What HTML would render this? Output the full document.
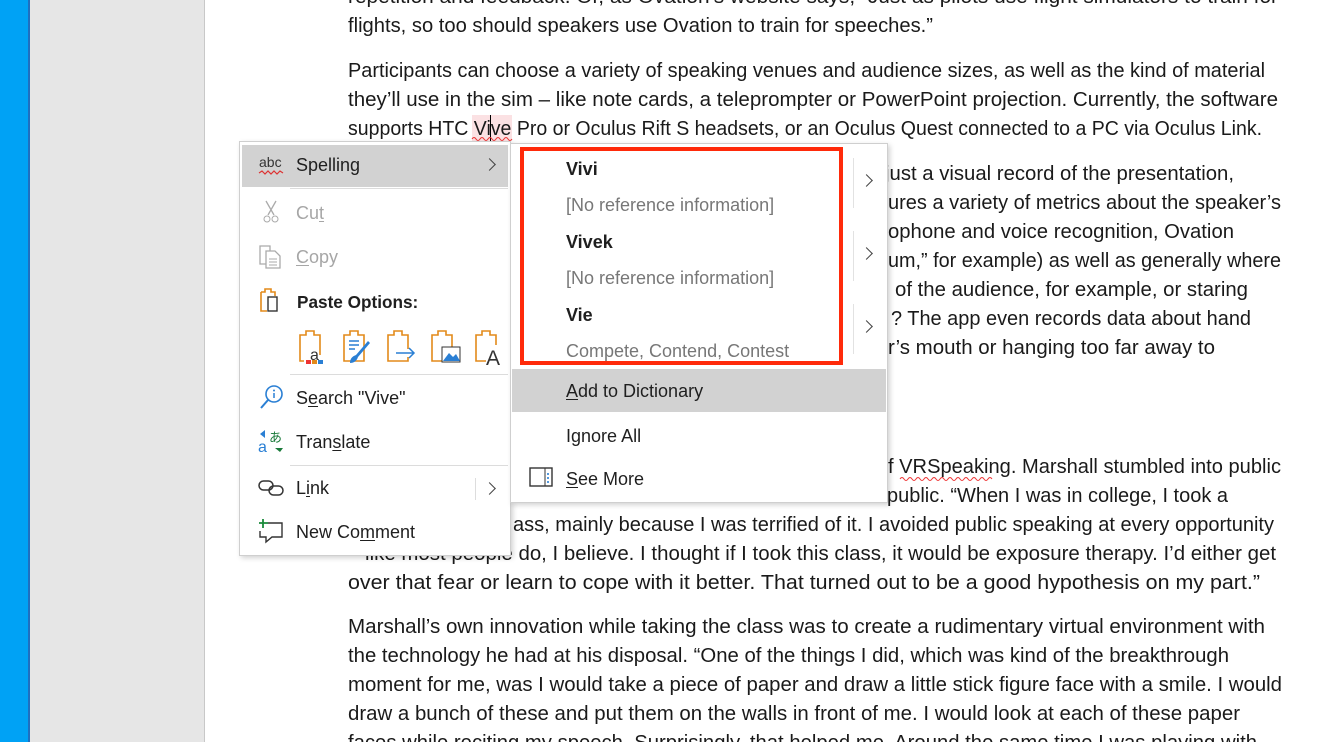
<!DOCTYPE html>
<html><head><meta charset="utf-8"><style>
*{margin:0;padding:0;box-sizing:border-box}
body{width:1319px;height:742px;overflow:hidden;background:#fff;position:relative;font-family:"Liberation Sans",sans-serif}
.abs{position:absolute}
.mi{position:absolute;font-size:18px;color:#1f1f1f;white-space:nowrap}
.dis{color:#a6a6a6}
.sep{position:absolute;height:1px;background:#dcdcdc}
.chev{position:absolute;width:9px;height:9px;border-right:1.6px solid #444;border-top:1.6px solid #444;transform:rotate(45deg)}
u{text-decoration:underline;text-underline-offset:2px}
</style></head><body>
<div class="abs" style="left:0;top:0;width:28px;height:742px;background:#00a2f5"></div>
<div class="abs" style="left:28px;top:0;width:2px;height:742px;background:#1f6fc0"></div>
<div class="abs" style="left:30px;top:0;width:174px;height:742px;background:#e6e6e6"></div>
<div class="abs" style="left:204px;top:0;width:1px;height:742px;background:#c8c8c8"></div>
<div class="abs" style="left:472px;top:115px;width:40px;height:26px;background:#fbe1e3"></div>
<div class="abs" style="left:490px;top:115px;width:1px;height:26px;background:#000"></div>
<svg class="abs" style="left:0;top:0" width="1319" height="742" font-family="Liberation Sans, sans-serif" font-size="20" fill="#1a1a1a">
<text x="348" y="3" textLength="930" lengthAdjust="spacingAndGlyphs">repetition and feedback. Or, as Ovation’s website says, “Just as pilots use flight simulators to train for</text>
<text x="348" y="32" textLength="585" lengthAdjust="spacingAndGlyphs">flights, so too should speakers use Ovation to train for speeches.”</text>
<text x="348" y="77" textLength="917" lengthAdjust="spacingAndGlyphs">Participants can choose a variety of speaking venues and audience sizes, as well as the kind of material</text>
<text x="348" y="106" textLength="930" lengthAdjust="spacingAndGlyphs">they’ll use in the sim – like note cards, a teleprompter or PowerPoint projection. Currently, the software</text>
<text x="348" y="135" textLength="914" lengthAdjust="spacingAndGlyphs">supports HTC Vive Pro or Oculus Rift S headsets, or an Oculus Quest connected to a PC via Oculus Link.</text>
<text x="885" y="180" textLength="349" lengthAdjust="spacingAndGlyphs">just a visual record of the presentation,</text>
<text x="888" y="209" textLength="393" lengthAdjust="spacingAndGlyphs">ures a variety of metrics about the speaker’s</text>
<text x="888" y="238" textLength="346" lengthAdjust="spacingAndGlyphs">ophone and voice recognition, Ovation</text>
<text x="888" y="267" textLength="393" lengthAdjust="spacingAndGlyphs">um,” for example) as well as generally where</text>
<text x="895" y="296" textLength="353" lengthAdjust="spacingAndGlyphs">of the audience, for example, or staring</text>
<text x="891" y="325" textLength="360" lengthAdjust="spacingAndGlyphs">? The app even records data about hand</text>
<text x="888" y="354" textLength="327" lengthAdjust="spacingAndGlyphs">r’s mouth or hanging too far away to</text>
<text x="888" y="473" textLength="393" lengthAdjust="spacingAndGlyphs">f VRSpeaking. Marshall stumbled into public</text>
<text x="887" y="502" textLength="341" lengthAdjust="spacingAndGlyphs">public. “When I was in college, I took a</text>
<text x="513" y="531" textLength="761" lengthAdjust="spacingAndGlyphs">ass, mainly because I was terrified of it. I avoided public speaking at every opportunity</text>
<text x="348" y="560" textLength="928" lengthAdjust="spacingAndGlyphs">– like most people do, I believe. I thought if I took this class, it would be exposure therapy. I’d either get</text>
<text x="348" y="589" textLength="912" lengthAdjust="spacingAndGlyphs">over that fear or learn to cope with it better. That turned out to be a good hypothesis on my part.”</text>
<text x="348" y="633" textLength="917" lengthAdjust="spacingAndGlyphs">Marshall’s own innovation while taking the class was to create a rudimentary virtual environment with</text>
<text x="348" y="662" textLength="881" lengthAdjust="spacingAndGlyphs">the technology he had at his disposal. “One of the things I did, which was kind of the breakthrough</text>
<text x="348" y="691" textLength="934" lengthAdjust="spacingAndGlyphs">moment for me, was I would take a piece of paper and draw a little stick figure face with a smile. I would</text>
<text x="348" y="720" textLength="892" lengthAdjust="spacingAndGlyphs">draw a bunch of these and put them on the walls in front of me. I would look at each of these paper</text>
<text x="348" y="749" textLength="909" lengthAdjust="spacingAndGlyphs">faces while reciting my speech. Surprisingly, that helped me. Around the same time I was playing with</text>
<path d="M472 139 q2 -3 4 0 t4 0 t4 0 t4 0 t4 0 t4 0 t4 0 t4 0 t4 0 t4 0" stroke="#e33" stroke-width="1" fill="none"/>
<path d="M900 479 q2 -3 4 0 t4 0 t4 0 t4 0 t4 0 t4 0 t4 0 t4 0 t4 0 t4 0 t4 0 t4 0 t4 0 t4 0 t4 0 t4 0 t4 0 t4 0 t4 0 t4 0 t4 0 t4 0 t4 0" stroke="#e33" stroke-width="1" fill="none"/>
</svg>

<!-- left menu -->
<div class="abs" style="left:239px;top:141px;width:272px;height:415px;background:#fff;border:1px solid #cfcfcf;box-shadow:2px 2px 5px rgba(0,0,0,.18)"></div>
<div class="abs" style="left:242px;top:145px;width:266px;height:42px;background:#d2d2d2"></div>
<div class="mi" style="left:259px;top:154px;font-size:14px;color:#333">abc</div>
<svg class="abs" style="left:258px;top:170px" width="26" height="6"><path d="M1 3 l3 -2 l3 3 l3 -3 l3 3 l3 -3 l3 3 l3 -3 l3 2" stroke="#d33" fill="none" stroke-width="1.2"/></svg>
<div class="mi" style="left:296px;top:155px">Spelling</div>
<div class="chev" style="left:485px;top:160px"></div>
<div class="sep" style="left:290px;top:188px;width:218px"></div>
<svg class="abs" style="left:262px;top:200px" width="18" height="24"><path d="M4 1 L12 15 M14 1 L6 15" stroke="#aaa" stroke-width="1.3" fill="none"/><circle cx="5" cy="19" r="3" stroke="#aaa" fill="none"/><circle cx="13" cy="19" r="3" stroke="#aaa" fill="none"/></svg>
<div class="mi dis" style="left:296px;top:203px">Cu<u>t</u></div>
<svg class="abs" style="left:258px;top:244px" width="26" height="26"><path d="M2 2 h10 v18 h-10 z" stroke="#aaa" fill="#fff" stroke-width="1.3"/><path d="M8 7 h9 l5 5 v12 h-14 z" stroke="#aaa" fill="#fff" stroke-width="1.3"/><path d="M11 15 h8 M11 18 h8 M11 21 h8" stroke="#aaa"/></svg>
<div class="mi dis" style="left:296px;top:247px"><u>C</u>opy</div>
<svg class="abs" style="left:259px;top:286px" width="26" height="28"><path d="M2 6 h4 v-3 h6 v3 h4 v4 M2 6 v19 h6" stroke="#e38a1a" fill="none" stroke-width="1.6"/><rect x="9" y="11" width="9" height="14" stroke="#333" fill="#fff" stroke-width="1.4"/></svg>
<div class="mi" style="left:297px;top:292px;font-weight:bold;font-size:17.2px">Paste Options:</div>
<svg class="abs" style="left:296px;top:327px" width="214" height="40">
<g stroke="#e38a1a" stroke-width="1.6" fill="none">
<path d="M4 8 h6 v-4 h8 v4 h6 v26 h-20 z"/><path d="M48 8 h6 v-4 h8 v4 h6 v26 h-20 z"/><path d="M92 8 h6 v-4 h8 v4 h6 v26 h-20 z"/><path d="M136 8 h6 v-4 h8 v4 h6 v26 h-20 z"/><path d="M180 8 h6 v-4 h8 v4 h6 v26 h-20 z"/>
</g>
<rect x="8" y="28" width="20" height="8" fill="#fff"/>
<text x="14" y="33" font-size="16" fill="#333" font-family="Liberation Sans">a</text>
<rect x="10" y="33" width="5" height="4" fill="#e33"/><rect x="16" y="33" width="5" height="4" fill="#e38a1a"/><rect x="22" y="33" width="5" height="4" fill="#2a7fd4"/>
<path d="M53 14 h10 M53 18 h10 M53 22 h6" stroke="#2a7fd4" stroke-width="1.4"/><path d="M54 36 q0 -6 6 -8 l12 -14 l2 2 l-12 14 q-2 6 -8 6z" fill="#2a7fd4"/>
<rect x="108" y="22" width="10" height="8" fill="#fff"/><path d="M100 26 h18 M113 21 l5 5 l-5 5" stroke="#2a7fd4" stroke-width="1.5" fill="none"/>
<rect x="146" y="20" width="18" height="15" fill="#fff" stroke="#333"/><path d="M147 34 l6 -8 l4 4 l3 -3 l4 7z" fill="#2a7fd4"/>
<rect x="190" y="18" width="16" height="20" fill="#fff"/><text x="190" y="38" font-size="21" fill="#333" font-family="Liberation Sans">A</text>
</svg>
<div class="sep" style="left:290px;top:374px;width:218px"></div>
<svg class="abs" style="left:259px;top:384px" width="26" height="28"><circle cx="15" cy="10" r="8" stroke="#2a7fd4" stroke-width="1.6" fill="none"/><path d="M9 16 L2 24" stroke="#2a7fd4" stroke-width="2"/><path d="M15 9 v5" stroke="#2a7fd4" stroke-width="1.5"/><circle cx="15" cy="6.5" r="1" fill="#2a7fd4"/></svg>
<div class="mi" style="left:296px;top:388px">S<u>e</u>arch "Vive"</div>
<svg class="abs" style="left:258px;top:428px" width="28" height="28"><text x="0" y="24" font-size="16" fill="#2a7fd4" font-family="Liberation Sans">a</text><text x="11" y="14" font-size="13" fill="#1a7a3a" font-family="Noto Sans CJK JP">あ</text><path d="M2 6 l5 -4 v8 z" fill="#2a7fd4"/><path d="M22 24 l-5 -4 h8 z" fill="#1a7a3a"/></svg>
<div class="mi" style="left:296px;top:432px">Tran<u>s</u>late</div>
<div class="sep" style="left:290px;top:465px;width:218px"></div>
<svg class="abs" style="left:258px;top:478px" width="28" height="20"><rect x="1" y="3" width="14" height="9" rx="4.5" stroke="#333" stroke-width="1.5" fill="none"/><rect x="11" y="8" width="14" height="9" rx="4.5" stroke="#333" stroke-width="1.5" fill="none"/></svg>
<div class="mi" style="left:296px;top:478px">L<u>i</u>nk</div>
<div class="abs" style="left:475px;top:478px;width:1px;height:22px;background:#ddd"></div>
<div class="chev" style="left:485px;top:484px"></div>
<svg class="abs" style="left:258px;top:518px" width="26" height="28"><path d="M10 5 h14 v14 h-10 l-6 5 v-5 h-6 v-6" stroke="#333" stroke-width="1.4" fill="none"/><path d="M5 1 v9 M1 5 h9" stroke="#1a8a3a" stroke-width="1.8"/></svg>
<div class="mi" style="left:296px;top:522px">New Co<u>m</u>ment</div>

<!-- submenu -->
<div class="abs" style="left:510px;top:143px;width:378px;height:360px;background:#fff;border:1px solid #cfcfcf;box-shadow:2px 2px 5px rgba(0,0,0,.18)"></div>
<div class="mi" style="left:566px;top:159px;font-weight:bold">Vivi</div>
<div class="mi" style="left:566px;top:195px;color:#777">[No reference information]</div>
<div class="mi" style="left:566px;top:232px;font-weight:bold">Vivek</div>
<div class="mi" style="left:566px;top:268px;color:#777">[No reference information]</div>
<div class="mi" style="left:566px;top:305px;font-weight:bold">Vie</div>
<div class="mi" style="left:566px;top:341px;color:#777">Compete, Contend, Contest</div>
<div class="abs" style="left:853px;top:158px;width:1px;height:50px;background:#e2e2e2"></div>
<div class="abs" style="left:853px;top:231px;width:1px;height:50px;background:#e2e2e2"></div>
<div class="abs" style="left:853px;top:304px;width:1px;height:50px;background:#e2e2e2"></div>
<div class="chev" style="left:862px;top:176px"></div>
<div class="chev" style="left:862px;top:249px"></div>
<div class="chev" style="left:862px;top:322px"></div>
<div class="abs" style="left:520px;top:147px;width:323px;height:218px;border:4px solid #ff2a0a"></div>
<div class="abs" style="left:512px;top:369px;width:374px;height:43px;background:#d2d2d2"></div>
<div class="mi" style="left:566px;top:381px"><u>A</u>dd to Dictionary</div>
<div class="mi" style="left:566px;top:426px">I<u>g</u>nore All</div>
<svg class="abs" style="left:529px;top:467px" width="26" height="22"><rect x="1" y="1" width="22" height="18" stroke="#333" stroke-width="1.4" fill="#fff"/><path d="M16 1 v18" stroke="#333"/><path d="M19 6 v2 M19 10 v2 M19 14 v2" stroke="#2a7fd4" stroke-width="1.6"/></svg>
<div class="mi" style="left:566px;top:469px"><u>S</u>ee More</div>
</body></html>
